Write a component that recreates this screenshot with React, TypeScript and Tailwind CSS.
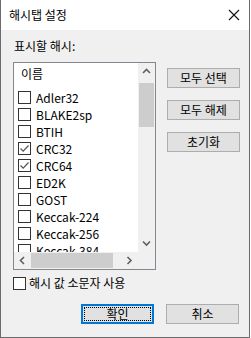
import React from 'react';

const hashes = [
  { name: 'Adler32', checked: false },
  { name: 'BLAKE2sp', checked: false },
  { name: 'BTIH', checked: false },
  { name: 'CRC32', checked: true },
  { name: 'CRC64', checked: true },
  { name: 'ED2K', checked: false },
  { name: 'GOST', checked: false },
  { name: 'Keccak-224', checked: false },
  { name: 'Keccak-256', checked: false },
  { name: 'Keccak-384', checked: false },
];

function CheckBox({ checked }: { checked: boolean }) {
  return (
    <div className="w-[13px] h-[13px] border border-[#333333] bg-white flex items-center justify-center shrink-0">
      {checked && (
        <svg width="11" height="11" viewBox="0 0 11 11">
          <path d="M1.5 5.5 L4.2 8.2 L9.5 2.5" fill="none" stroke="#555555" strokeWidth="1.2" />
        </svg>
      )}
    </div>
  );
}

function Chevron({ dir }: { dir: 'up' | 'down' | 'left' | 'right' }) {
  const d = {
    up: 'M1 5 L4.5 1.5 L8 5',
    down: 'M1 1.5 L4.5 5 L8 1.5',
    left: 'M5 1 L1.5 4.5 L5 8',
    right: 'M1.5 1 L5 4.5 L1.5 8',
  }[dir];
  const w = dir === 'up' || dir === 'down' ? 9 : 7;
  const h = dir === 'up' || dir === 'down' ? 7 : 9;
  return (
    <svg width={w} height={h} viewBox={`0 0 ${w} ${h}`}>
      <path d={d} fill="none" stroke="#606060" strokeWidth="1.6" />
    </svg>
  );
}

function Button({ label, focused }: { label: string; focused?: boolean }) {
  if (focused) {
    return (
      <div className="w-[73px] h-[20px] border-2 border-[#0078d7] bg-[#e1e1e1] p-px">
        <div className="w-full h-full border border-dotted border-black flex items-center justify-center">
          {label}
        </div>
      </div>
    );
  }
  return (
    <div className="w-[73px] h-[20px] border border-[#adadad] bg-[#e1e1e1] flex items-center justify-center">
      {label}
    </div>
  );
}

export default function App() {
  return (
    <div
      className="w-[250px] h-[338px] flex flex-col border-l border-r border-b border-[#6b6b6b] bg-[#f0f0f0] text-[12px] text-black leading-[16px]"
      style={{ fontFamily: '"Noto Sans CJK KR", "Noto Sans", sans-serif' }}
    >
      <div className="h-[30px] bg-white flex items-center justify-between pl-[8px] pr-[8px] shrink-0">
        <span>해시탭 설정</span>
        <svg width="12" height="12" viewBox="0 0 12 12" className="mr-[1px]">
          <path d="M1 1 L11 11 M11 1 L1 11" stroke="#111111" strokeWidth="1.1" />
        </svg>
      </div>

      <div className="pl-[12px] pt-[8px]">
        <div className="pl-px">표시할 해시:</div>

        <div className="flex mt-[8px]">
          <div className="w-[143px] h-[208px] border border-[#828790] bg-white flex flex-col">
            <div className="flex h-[189px]">
              <div className="w-[124px] overflow-hidden">
                <div className="h-[26px] flex items-center pl-[7px] pb-[4px]">이름</div>
                {hashes.map((h) => (
                  <div key={h.name} className="h-[17px] flex items-center pl-[4px] gap-[5px] whitespace-nowrap">
                    <CheckBox checked={h.checked} />
                    <span>{h.name}</span>
                  </div>
                ))}
              </div>
              <div className="w-[17px] bg-[#f0f0f0] flex flex-col items-center">
                <div className="h-[17px] flex items-center justify-center">
                  <Chevron dir="up" />
                </div>
                <div className="w-[15px] h-[44px] bg-[#cdcdcd] mt-[3px]" />
                <div className="flex-1" />
                <div className="h-[17px] flex items-center justify-center">
                  <Chevron dir="down" />
                </div>
              </div>
            </div>
            <div className="flex h-[17px] bg-[#f0f0f0]">
              <div className="w-[17px] flex items-center justify-center">
                <Chevron dir="left" />
              </div>
              <div className="flex-1 flex items-center">
                <div className="h-[15px] w-[82px] bg-[#cdcdcd]" />
              </div>
              <div className="w-[17px] flex items-center justify-center">
                <Chevron dir="right" />
              </div>
              <div className="w-[17px]" />
            </div>
          </div>

          <div className="flex flex-col gap-[12px] ml-[11px] mt-[6px]">
            <Button label="모두 선택" />
            <Button label="모두 해제" />
            <Button label="초기화" />
          </div>
        </div>

        <div className="flex items-center gap-[3px] mt-[5px]">
          <CheckBox checked={false} />
          <span>해시 값 소문자 사용</span>
        </div>

        <div className="flex justify-end gap-[12px] mt-[13px] pr-[10px]">
          <Button label="확인" focused />
          <Button label="취소" />
        </div>
      </div>
    </div>
  );
}
